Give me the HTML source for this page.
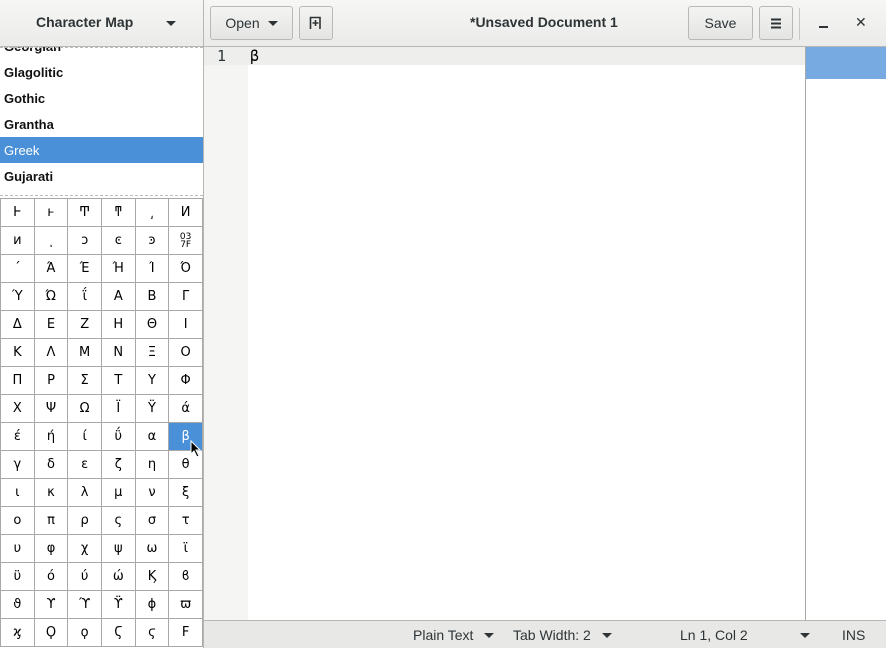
<!DOCTYPE html>
<html><head><meta charset="utf-8"><style>
*{margin:0;padding:0;box-sizing:border-box}
body{width:886px;height:648px;overflow:hidden;background:#fff;font-family:"Liberation Sans","DejaVu Sans",sans-serif;position:relative;color:#2e3436}
.hdr{position:absolute;left:0;top:0;width:886px;height:47px;background:linear-gradient(#f6f6f5,#ebebea);border-bottom:1px solid #b6b6b3}
.abs{position:absolute}
.btn{position:absolute;top:6px;height:34px;border:1px solid #b8b8b6;border-radius:3px;background:linear-gradient(#f4f4f3,#e4e4e2);font-size:14px;display:flex;align-items:center;justify-content:center;color:#2e3436}
.tri{display:block;width:0;height:0;border-left:5px solid transparent;border-right:5px solid transparent;border-top:5px solid #2e3436}
.list{position:absolute;left:0;top:47px;width:203px;height:148px;overflow:hidden}
.list div{position:absolute;left:0;width:203px;height:26px;line-height:28px;padding-left:4px;font-size:13px;font-weight:bold;color:#111}
.grid{position:absolute;left:0;top:198px;width:203px;height:450px}
.grid table{border-collapse:collapse;font-family:"DejaVu Sans",sans-serif;font-size:13px}
.grid td{width:33.7px;height:28px;border:1px solid #a8a8a8;text-align:center;color:#000;padding:0}
.sb{position:absolute;left:204px;top:620px;width:682px;height:28px;background:#e8e8e7;border-top:1px solid #b6b6b3;font-size:14px;color:#2e3436}
.sb span{position:absolute;top:6px}
.sb .tri{position:absolute;top:12px}
</style></head><body>
<div class="hdr"></div>
<div class="abs" style="left:36px;top:14px;font-size:14px;font-weight:bold">Character Map</div>
<div class="abs" style="left:166px;top:21px"><span class="tri"></span></div>
<div class="abs" style="left:203px;top:0;width:1px;height:648px;background:#b6b6b3"></div>
<div class="btn" style="left:210px;width:83px">Open<span class="tri" style="margin-left:8px;margin-top:1px"></span></div>
<div class="btn" style="left:299px;width:34px"><svg width="14" height="14" viewBox="0 0 14 14"><path d="M1.5 13V1.5H11V13" fill="none" stroke="#2e3436" stroke-width="1.6"/><path d="M6.5 4v6M3.5 7h6" stroke="#2e3436" stroke-width="1.6"/></svg></div>
<div class="abs" style="left:470px;top:14px;font-size:14px;font-weight:bold">*Unsaved Document 1</div>
<div class="btn" style="left:688px;width:65px">Save</div>
<div class="btn" style="left:759px;width:34px"><svg width="12" height="11"><path d="M1 1.5h10M1 5.5h10M1 9.5h10" stroke="#2e3436" stroke-width="2"/></svg></div>
<div class="abs" style="left:799px;top:8px;width:1px;height:32px;background:#c8c8c6"></div>
<div class="abs" style="left:819px;top:26px;width:9px;height:2px;background:#2e3436"></div>
<div class="abs" style="left:855px;top:14px;font-size:14px;font-weight:bold">✕</div>

<div class="list">
<div style="top:-14px">Georgian</div>
<div style="top:12px">Glagolitic</div>
<div style="top:38px">Gothic</div>
<div style="top:64px">Grantha</div>
<div style="top:90px;background:#4a90d9;color:#fff;font-weight:normal">Greek</div>
<div style="top:116px">Gujarati</div>
</div>
<div class="abs" style="left:0;top:47px;width:203px;height:1px;border-top:1px dashed #bbb"></div>
<div class="abs" style="left:0;top:195px;width:203px;height:1px;border-top:1px dashed #bbb"></div>
<div class="grid"><table>
<tr><td>Ͱ</td><td>ͱ</td><td>Ͳ</td><td>ͳ</td><td>͵</td><td>Ͷ</td></tr>
<tr><td>ͷ</td><td>ͺ</td><td>ͻ</td><td>ͼ</td><td>ͽ</td><td style="font-size:9px;line-height:8px">03<br>7F</td></tr>
<tr><td>΄</td><td>Ά</td><td>Έ</td><td>Ή</td><td>Ί</td><td>Ό</td></tr>
<tr><td>Ύ</td><td>Ώ</td><td>ΐ</td><td>Α</td><td>Β</td><td>Γ</td></tr>
<tr><td>Δ</td><td>Ε</td><td>Ζ</td><td>Η</td><td>Θ</td><td>Ι</td></tr>
<tr><td>Κ</td><td>Λ</td><td>Μ</td><td>Ν</td><td>Ξ</td><td>Ο</td></tr>
<tr><td>Π</td><td>Ρ</td><td>Σ</td><td>Τ</td><td>Υ</td><td>Φ</td></tr>
<tr><td>Χ</td><td>Ψ</td><td>Ω</td><td>Ϊ</td><td>Ϋ</td><td>ά</td></tr>
<tr><td>έ</td><td>ή</td><td>ί</td><td>ΰ</td><td>α</td><td style="background:#4a90d9;color:#fff">β</td></tr>
<tr><td>γ</td><td>δ</td><td>ε</td><td>ζ</td><td>η</td><td>θ</td></tr>
<tr><td>ι</td><td>κ</td><td>λ</td><td>μ</td><td>ν</td><td>ξ</td></tr>
<tr><td>ο</td><td>π</td><td>ρ</td><td>ς</td><td>σ</td><td>τ</td></tr>
<tr><td>υ</td><td>φ</td><td>χ</td><td>ψ</td><td>ω</td><td>ϊ</td></tr>
<tr><td>ϋ</td><td>ό</td><td>ύ</td><td>ώ</td><td>Ϗ</td><td>ϐ</td></tr>
<tr><td>ϑ</td><td>ϒ</td><td>ϓ</td><td>ϔ</td><td>ϕ</td><td>ϖ</td></tr>
<tr><td>ϗ</td><td>Ϙ</td><td>ϙ</td><td>Ϛ</td><td>ϛ</td><td>Ϝ</td></tr>
</table></div>
<svg class="abs" style="left:190px;top:440px" width="12" height="18"><path d="M1 1v13l3-3 3 6 2-1-3-6h4z" fill="#000" stroke="#fff" stroke-width="1"/></svg>

<div class="abs" style="left:204px;top:47px;width:44px;height:573px;background:#f5f5f4"></div>
<div class="abs" style="left:248px;top:47px;width:557px;height:18px;background:#eeeeec"></div>
<div class="abs" style="left:204px;top:47px;width:44px;height:18px;background:#eeeeec"></div>
<div class="abs" style="left:217px;top:47px;font-size:15px;font-family:'DejaVu Sans Mono',monospace;color:#2e3436">1</div>
<div class="abs" style="left:250px;top:47px;font-size:15px;font-family:'DejaVu Sans Mono',monospace;color:#000">β</div>
<div class="abs" style="left:805px;top:47px;width:1px;height:573px;background:#a8a8a8"></div>
<div class="abs" style="left:806px;top:47px;width:80px;height:32px;background:#77aae0"></div>

<div class="sb">
<span style="left:209px">Plain Text</span><i class="tri" style="left:280px"></i>
<span style="left:309px">Tab Width: 2</span><i class="tri" style="left:398px"></i>
<span style="left:476px">Ln 1, Col 2</span>
<i class="tri" style="left:596px"></i>
<span style="left:638px">INS</span>
</div>
</body></html>
